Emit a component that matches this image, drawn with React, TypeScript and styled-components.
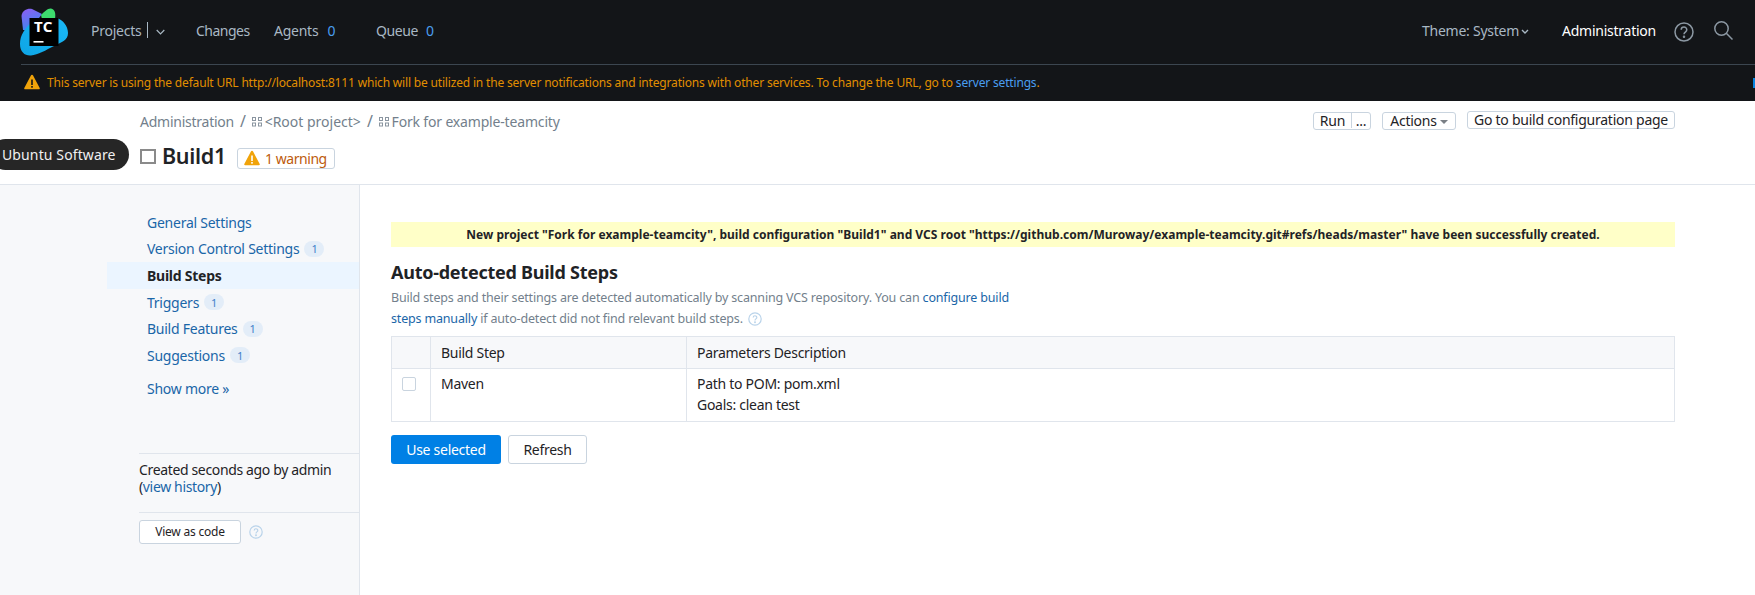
import React from "react";
import styled, { createGlobalStyle } from "styled-components";

const Global = createGlobalStyle`
  html, body { margin: 0; padding: 0; background: #fff; overflow: hidden; }
  body { font-family: "Noto Sans", "Liberation Sans", sans-serif; font-size: 14px; color: #1f2326; }
  * { box-sizing: border-box; }
  a { text-decoration: none; }
`;

const Page = styled.div`
  width: 1755px;
  height: 595px;
  display: flex;
  flex-direction: column;
  position: relative;
  overflow: hidden;
`;
const Dark = styled.header`
  height: 101px;
  background: #131518;
  flex: none;
  padding-left: 18px;
`;
const TopRow = styled.div`
  height: 65px;
  display: flex;
  align-items: center;
  border-bottom: 1px solid #3c4650;
  margin-left: 3px;
`;
const Logo = styled.svg`
  width: 48px;
  height: 48px;
  margin: 0 23px 0 -1px;
  flex: none;
`;
const NavItem = styled.span<{ $w?: number; $bright?: boolean; $ls?: number; $ml?: number }>`
  color: ${(p) => (p.$bright ? "#ffffff" : "#a9b8c4")};
  font-size: 14px;
  letter-spacing: ${(p) => p.$ls ?? -0.25}px;
  ${(p) => (p.$w ? `width:${p.$w}px;` : "")}
  margin-left: ${(p) => p.$ml ?? 0}px;
  flex: none;
  display: flex;
  align-items: center;
  white-space: nowrap;
  margin-bottom: 4px;
`;
const Count = styled.span<{ $ml?: number }>`
  color: #4a9ef0;
  margin-left: ${(p) => p.$ml ?? 8}px;
`;
const Spacer = styled.div`
  flex: 1;
`;
const Sep = styled.span`
  width: 1px;
  height: 16px;
  background: #a9b8c4;
  margin: 0 8px 0 6px;
`;
const NavChevron = styled.svg<{ $mt: number; $ml?: number }>`
  margin-top: ${(p) => p.$mt}px;
  margin-left: ${(p) => p.$ml ?? 0}px;
  flex: none;
`;
const IconBtn = styled.svg<{ $ml: number; $mt?: number; $mr?: number }>`
  margin-left: ${(p) => p.$ml}px;
  margin-top: ${(p) => p.$mt ?? 0}px;
  margin-right: ${(p) => p.$mr ?? 0}px;
  flex: none;
`;
const Notice = styled.div`
  height: 36px;
  display: flex;
  align-items: center;
  color: #e18f00;
  font-size: 12px;
  letter-spacing: -0.175px;
  padding: 0 0 2px 6px;
  gap: 7px;
  white-space: nowrap;
  a {
    color: #4a9ef0;
  }
`;
const Edge = styled.span`
  position: absolute;
  left: 1753px;
  top: 78px;
  width: 2px;
  height: 10px;
  background: #0a84e0;
`;
const SubHeader = styled.div`
  height: 84px;
  flex: none;
  border-bottom: 1px solid #e0e5ec;
  padding: 10px 0 0 140px;
  display: flex;
  justify-content: space-between;
`;
const Crumbs = styled.div`
  display: flex;
  flex-direction: column;
`;
const Crumb = styled.div`
  color: #737f8c;
  font-size: 14px;
  letter-spacing: -0.25px;
  height: 20px;
  display: flex;
  align-items: center;
  gap: 3px;
  b {
    font-weight: 400;
    margin: 0 3px;
    font-size: 16px;
  }
`;
const RootName = styled.span`
  letter-spacing: 0;
`;
const ForkName = styled.span`
  letter-spacing: -0.17px;
`;
const TitleRow = styled.div`
  display: flex;
  align-items: center;
  margin-top: 12px;
  height: 30px;
`;
const Box = styled.span`
  width: 16px;
  height: 15px;
  border: 2px solid #8a8a8a;
  margin: 0 6px 3px 0;
`;
const Title = styled.h1`
  font-size: 21.5px;
  font-weight: 600;
  margin: 0 11px 5px 0;
  letter-spacing: -0.3px;
  line-height: 26px;
`;
const Warn = styled.span`
  border: 1px solid #c9d4df;
  border-radius: 3px;
  height: 21px;
  width: 98px;
  display: flex;
  align-items: center;
  gap: 5px;
  padding-left: 6px;
  color: #bd5b0d;
  font-size: 14px;
  letter-spacing: -0.45px;
`;
const Actions = styled.div`
  display: flex;
  align-items: flex-start;
  gap: 11px;
  padding-right: 80px;
`;
const SmallBtn = styled.span<{ $w: number; $mt?: number }>`
  border: 1px solid #c9d4df;
  border-radius: 3px;
  height: 18px;
  width: ${(p) => p.$w}px;
  margin-top: ${(p) => p.$mt ?? 1}px;
  padding-bottom: 1px;
  display: flex;
  align-items: center;
  justify-content: center;
  font-size: 14px;
  letter-spacing: -0.25px;
  white-space: nowrap;
  color: #1f2326;
`;
const RunPart = styled.span`
  flex: 1;
  text-align: center;
`;
const DotsPart = styled.span`
  width: 19px;
  text-align: center;
  border-left: 1px solid #c9d4df;
  height: 100%;
  line-height: 15px;
`;
const Caret = styled.span`
  width: 0;
  height: 0;
  border-left: 4.5px solid transparent;
  border-right: 4.5px solid transparent;
  border-top: 4.5px solid #7a7f85;
  margin-left: 3px;
  margin-top: 2px;
`;
const Pill = styled.div`
  position: absolute;
  left: -10px;
  top: 139px;
  width: 139px;
  height: 31px;
  border-radius: 16px;
  background: #262626;
  color: #f0f0f0;
  font-size: 14px;
  letter-spacing: 0.12px;
  display: flex;
  align-items: center;
  padding-left: 12px;
  white-space: nowrap;
`;
const Body = styled.div`
  flex: 1;
  display: flex;
`;
const Side = styled.aside`
  width: 360px;
  flex: none;
  background: #f7f8fa;
  border-right: 1px solid #e0e5ec;
  padding: 24px 0 0 107px;
  display: flex;
  flex-direction: column;
`;
const SideItem = styled.div<{ $on?: boolean }>`
  height: 26.6px;
  display: flex;
  align-items: center;
  padding-left: 40px;
  font-size: 14px;
  letter-spacing: -0.25px;
  color: ${(p) => (p.$on ? "#1f2326" : "#1a66a8")};
  font-weight: ${(p) => (p.$on ? 700 : 400)};
  background: ${(p) => (p.$on ? "#ebf5ff" : "transparent")};
`;
const Badge = styled.span`
  width: 20px;
  height: 16px;
  border-radius: 8px;
  background: #e3edf8;
  color: #3f7fc9;
  font-size: 11px;
  margin-left: 5px;
  display: flex;
  align-items: center;
  justify-content: center;
`;
const ShowMore = styled.a`
  color: #1a66a8;
  margin: 10.4px 0 0 40px;
  letter-spacing: -0.25px;
  height: 20px;
`;
const Info = styled.div`
  margin: 54px 0 0 32px;
  border-top: 1px solid #e0e5ec;
  padding: 7px 0 17px;
  line-height: 17px;
  letter-spacing: -0.35px;
  a {
    color: #1a66a8;
  }
`;
const CodeRow = styled.div`
  margin-left: 32px;
  border-top: 1px solid #e0e5ec;
  padding-top: 7px;
  display: flex;
  align-items: center;
  gap: 6px;
`;
const CodeBtn = styled.span`
  width: 102px;
  height: 24px;
  background: #fff;
  border: 1px solid #c9d4df;
  border-radius: 3px;
  display: flex;
  align-items: center;
  justify-content: center;
  font-size: 12px;
  letter-spacing: -0.2px;
`;
const Main = styled.main`
  flex: 1;
  padding: 37px 80px 0 31px;
`;
const Banner = styled.div`
  height: 25px;
  background: #ffffc8;
  display: flex;
  align-items: center;
  justify-content: center;
  font-size: 12px;
  font-weight: 700;
  letter-spacing: 0.01px;
  color: #1f2326;
  white-space: nowrap;
`;
const Heading = styled.h2`
  font-size: 18px;
  font-weight: 700;
  letter-spacing: -0.25px;
  margin: 13px 0 0;
  line-height: 24px;
`;
const Desc = styled.p`
  margin: 3px 0 0;
  font-size: 12.5px;
  line-height: 21px;
  letter-spacing: -0.17px;
  color: #737f8c;
  white-space: nowrap;
  a {
    color: #1a66a8;
  }
`;
const HelpDot = styled.svg`
  vertical-align: -3px;
  margin-left: 2px;
`;
const Table = styled.div`
  margin-top: 7px;
  border: 1px solid #e0e5ec;
  display: grid;
  grid-template-columns: 39px 256px 1fr;
  grid-template-rows: 32px 52px;
`;
const Cell = styled.div<{ $head?: boolean; $last?: boolean }>`
  background: ${(p) => (p.$head ? "#f7f8fa" : "#fff")};
  border-right: ${(p) => (p.$last ? "0" : "1px solid #e0e5ec")};
  border-bottom: ${(p) => (p.$head ? "1px solid #e0e5ec" : "0")};
  padding: ${(p) => (p.$head ? "5px" : "4px")} 10px 0 10px;
  font-size: 14px;
  letter-spacing: -0.28px;
  line-height: 21px;
`;
const Check = styled.span`
  display: block;
  width: 14px;
  height: 14px;
  margin: 4px 0 0 0;
  border: 1px solid #c9d4df;
  border-radius: 2px;
  background: #fff;
`;
const Buttons = styled.div`
  display: flex;
  gap: 7px;
  margin-top: 13px;
`;
const Btn = styled.span<{ $primary?: boolean }>`
  height: 29px;
  width: ${(p) => (p.$primary ? 110 : 79)}px;
  border-radius: 3px;
  display: flex;
  align-items: center;
  justify-content: center;
  letter-spacing: -0.28px;
  background: ${(p) => (p.$primary ? "#0080e5" : "#fff")};
  color: ${(p) => (p.$primary ? "#fff" : "#1f2326")};
  border: ${(p) => (p.$primary ? "0" : "1px solid #c9d4df")};
  white-space: nowrap;
`;
const LogoText = styled.text`
  font-family: "Noto Sans", sans-serif;
  font-size: 15px;
  font-weight: 700;
  fill: #fff;
  letter-spacing: 0.3px;
`;

const TcLogo = () => (
  <Logo viewBox="0 0 48 48">
    <defs>
      <linearGradient id="g1" x1="0" y1="0" x2="0.4" y2="1">
        <stop offset="0" stopColor="#8f5cf2" />
        <stop offset="1" stopColor="#3f86f2" />
      </linearGradient>
      <linearGradient id="g2" x1="0" y1="1" x2="1" y2="0">
        <stop offset="0" stopColor="#0ea5e6" />
        <stop offset="1" stopColor="#1ab9f7" />
      </linearGradient>
    </defs>
    <path d="M1.500 8C2 2 8 0 12 1L22 6 10 22H3z" fill="url(#g1)" />
    <path d="M21 7C24 4 28 0 31 .5c4 .5 5 5.500 4 10.500H22z" fill="#3ddc6e" />
    <path d="M12 14C5 20 0 27 0 36c0 8 5 12 11 11.500 7-.5 15-5.500 23-9.500 8-4 14-6 14-13 0-7-5-13-11-15z" fill="url(#g2)" />
    <rect x="9.500" y="10" width="29" height="28" fill="#000" />
    <LogoText x="14" y="24">TC</LogoText>
    <rect x="13.500" y="33" width="10" height="1.600" fill="#fff" />
  </Logo>
);
const Grid = () => (
  <svg width="10" height="11" viewBox="0 0 10 11" fill="none" stroke="#8a95a0" strokeWidth="1">
    <rect x="0.500" y="1.500" width="3" height="3" />
    <rect x="6.500" y="1.500" width="3" height="3" />
    <rect x="0.500" y="7" width="3" height="3" />
    <rect x="6.500" y="7" width="3" height="3" />
  </svg>
);
const Tri = ({ s, mark }: { s: number; mark: string }) => (
  <svg width={s} height={s} viewBox="0 0 16 16" style={{ flex: "none" }}>
    <path d="M8 .8c.5 0 .9.3 1.100.7l6.600 12.500c.3.700-.1 1.300-.9 1.300H1.200c-.8 0-1.200-.6-.9-1.300L6.900 1.500c.2-.4.600-.7 1.100-.7z" fill="#f0a30a" />
    <rect x="7.200" y="5.500" width="1.600" height="5.500" fill={mark} />
    <rect x="7.200" y="12" width="1.600" height="1.700" fill={mark} />
  </svg>
);
const Help = ({ s, c }: { s: number; c: string }) => (
  <HelpDot width={s} height={s} viewBox="0 0 14 14" fill="none" stroke={c} strokeWidth="1.200">
    <circle cx="7" cy="7" r="6.200" />
    <path d="M5.200 5.500c0-2.300 3.600-2.300 3.600-.1 0 1.500-1.800 1.500-1.800 3" />
    <circle cx="7" cy="10.300" r=".4" />
  </HelpDot>
);

export default function App() {
  return (
    <Page>
      <Global />
      <Dark>
        <TopRow>
          <TcLogo />
          <NavItem $w={105}>
            Projects
            <Sep />
            <NavChevron $mt={3} width="9" height="6" viewBox="0 0 9 6" fill="none" stroke="#a9b8c4" strokeWidth="1.200">
              <path d="M.7 1l3.800 3.800L8.300 1" />
            </NavChevron>
          </NavItem>
          <NavItem $w={78} $ls={-0.5}>Changes</NavItem>
          <NavItem $w={102} $ls={-0.25}>
            Agents<Count $ml={9}>0</Count>
          </NavItem>
          <NavItem $ls={-0.4}>
            Queue<Count>0</Count>
          </NavItem>
          <Spacer />
          <NavItem>
            Theme: System
            <NavChevron $mt={3} $ml={2} width="8" height="5" viewBox="0 0 8 5" fill="none" stroke="#a9b8c4" strokeWidth="1.400">
              <path d="M1 1l3 3 3-3" />
            </NavChevron>
          </NavItem>
          <NavItem $bright $ml={33}>Administration</NavItem>
          <IconBtn $ml={18} width="20" height="20" viewBox="0 0 20 20" fill="none" stroke="#8c98a3" strokeWidth="1.500">
            <circle cx="10" cy="10" r="9" />
            <path d="M7.200 7.800c0-3.600 5.600-3.600 5.600 0 0 2.300-2.800 2.300-2.800 4.500" />
            <circle cx="10" cy="14.800" r=".5" />
          </IconBtn>
          <IconBtn $ml={20} $mt={-4} $mr={22} width="19" height="19" viewBox="0 0 19 19" fill="none" stroke="#8c98a3" strokeWidth="1.500">
            <circle cx="7.500" cy="7.500" r="6.700" />
            <path d="M12.300 12.300l6.200 6.200" />
          </IconBtn>
        </TopRow>
        <Notice>
          <Tri s={16} mark="#131518" />
          <span>
            This server is using the default URL http://localhost:8111 which will be utilized in the server notifications and integrations with other services. To change the URL, go to <a>server settings</a>.
          </span>
        </Notice>
      </Dark>
      <Edge />
      <SubHeader>
        <Crumbs>
          <Crumb>
            Administration<b>/</b>
            <Grid />
            <RootName>&lt;Root project&gt;</RootName><b>/</b>
            <Grid />
            <ForkName>Fork for example-teamcity</ForkName>
          </Crumb>
          <TitleRow>
            <Box />
            <Title>Build1</Title>
            <Warn>
              <Tri s={16} mark="#ffffff" />1 warning
            </Warn>
          </TitleRow>
        </Crumbs>
        <Actions>
          <SmallBtn $w={58}>
            <RunPart>Run</RunPart>
            <DotsPart>...</DotsPart>
          </SmallBtn>
          <SmallBtn $w={74}>
            Actions
            <Caret />
          </SmallBtn>
          <SmallBtn $w={208} $mt={0}>Go to build configuration page</SmallBtn>
        </Actions>
      </SubHeader>
      <Pill>Ubuntu Software</Pill>
      <Body>
        <Side>
          <SideItem>General Settings</SideItem>
          <SideItem>
            Version Control Settings<Badge>1</Badge>
          </SideItem>
          <SideItem $on>Build Steps</SideItem>
          <SideItem>
            Triggers<Badge>1</Badge>
          </SideItem>
          <SideItem>
            Build Features<Badge>1</Badge>
          </SideItem>
          <SideItem>
            Suggestions<Badge>1</Badge>
          </SideItem>
          <ShowMore>Show more »</ShowMore>
          <Info>
            Created seconds ago by admin
            <br />(<a>view history</a>)
          </Info>
          <CodeRow>
            <CodeBtn>View as code</CodeBtn>
            <Help s={14} c="#b9d3ea" />
          </CodeRow>
        </Side>
        <Main>
          <Banner>
            New project "Fork for example-teamcity", build configuration "Build1" and VCS root "https://github.com/Muroway/example-teamcity.git#refs/heads/master" have been successfully created.
          </Banner>
          <Heading>Auto-detected Build Steps</Heading>
          <Desc>
            Build steps and their settings are detected automatically by scanning VCS repository. You can <a>configure build</a>
            <br />
            <a>steps manually</a> if auto-detect did not find relevant build steps. <Help s={14} c="#b9d3ea" />
          </Desc>
          <Table>
            <Cell $head />
            <Cell $head>Build Step</Cell>
            <Cell $head $last>Parameters Description</Cell>
            <Cell><Check /></Cell>
            <Cell>Maven</Cell>
            <Cell $last>
              Path to POM: pom.xml
              <br />
              Goals: clean test
            </Cell>
          </Table>
          <Buttons>
            <Btn $primary>Use selected</Btn>
            <Btn>Refresh</Btn>
          </Buttons>
        </Main>
      </Body>
    </Page>
  );
}
